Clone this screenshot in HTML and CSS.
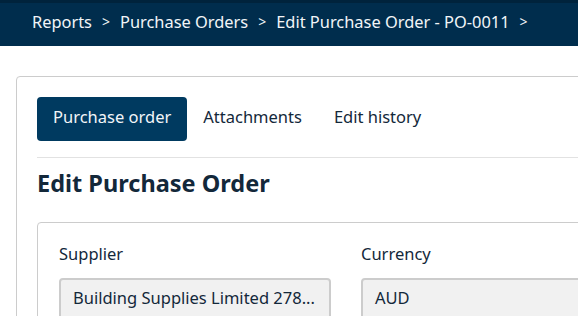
FILE: index.html
```html
<!DOCTYPE html>
<html lang="en">
<head>
    <meta charset="UTF-8">
    <meta name="viewport" content="width=device-width, initial-scale=1.0">
    <title>Edit Purchase Order</title>
    <link rel="stylesheet" href="styles.css">
</head>
<body>
    <header class="topbar">
        <nav class="breadcrumb">
            <span>Reports</span><span class="sep">&gt;</span>
            <span>Purchase Orders</span><span class="sep">&gt;</span>
            <span>Edit Purchase Order - PO-0011</span><span class="sep">&gt;</span>
        </nav>
    </header>

    <main class="page">
        <div class="card">
            <div class="tabs">
                <div class="tab active">Purchase order</div>
                <div class="tab">Attachments</div>
                <div class="tab">Edit history</div>
            </div>

            <h1>Edit Purchase Order</h1>

            <div class="form-card">
                <div class="form-row">
                    <div class="field">
                        <label>Supplier</label>
                        <div class="input">Building Supplies Limited 278...</div>
                    </div>
                    <div class="field wide">
                        <label>Currency</label>
                        <div class="input">AUD</div>
                    </div>
                </div>
            </div>
        </div>
    </main>
</body>
</html>
```

FILE: styles.css
```css
body {
    margin: 0;
    font-family: "Noto Sans", sans-serif;
    color: #13283a;
    background: white;
    overflow: hidden;
}

.topbar {
    background: #002d4d;
    border-top: 3px solid #00233c;
    height: 46px;
    display: flex;
    align-items: center;
    padding-left: 32px;
    box-sizing: border-box;
}

.breadcrumb {
    color: #f2f5f8;
    font-size: 16.4px;
    line-height: 20px;
    display: flex;
    white-space: nowrap;
    margin-top: -5px;
}

.breadcrumb .sep {
    margin: 0 10px;
    font-size: 14px;
}

.page {
    padding: 30px 0 0 16px;
    width: 900px;
}

.card {
    border: 1px solid #cccccc;
    border-radius: 4px;
    padding: 20px;
}

.tabs {
    display: flex;
    padding-bottom: 16px;
    border-bottom: 1px solid #e2e2e2;
}

.tab {
    height: 44px;
    line-height: 40px;
    padding: 0 16px 4px;
    box-sizing: border-box;
    font-size: 16.5px;
    color: #13283a;
    border-radius: 4px;
}

.tab.active {
    background: #003a60;
    color: #f2f5f8;
}

h1 {
    font-size: 23.5px;
    font-weight: bold;
    margin: 9px 0 23px;
    line-height: 32px;
    color: #13283a;
}

.form-card {
    border: 1px solid #cccccc;
    border-radius: 4px;
    padding: 21px;
}

.form-row {
    display: flex;
    gap: 30px;
}

.field {
    width: 272px;
}

.field.wide {
    width: 400px;
}

.field label {
    display: block;
    font-size: 16.5px;
    line-height: 22px;
    margin-bottom: 13px;
    margin-top: -1px;
}

.input {
    background: #f1f1f1;
    border: 2px solid #cccccc;
    border-radius: 4px;
    padding: 0 12px 4px;
    height: 38px;
    line-height: 36px;
    font-size: 16.5px;
    white-space: nowrap;
    overflow: hidden;
}
```
